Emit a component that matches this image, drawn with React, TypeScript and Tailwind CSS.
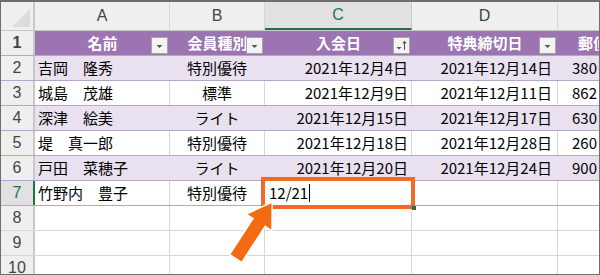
import React from 'react'

const cols = [
  { key: 'A', w: 'w-[135px]' },
  { key: 'B', w: 'w-[95px]' },
  { key: 'C', w: 'w-[147px]' },
  { key: 'D', w: 'w-[146px]' },
]

type Row = { name: string; kind: string; joined: string; deadline: string; zip: string }

const rows: Row[] = [
  { name: '吉岡　隆秀', kind: '特別優待', joined: '2021年12月4日', deadline: '2021年12月14日', zip: '380' },
  { name: '城島　茂雄', kind: '標準', joined: '2021年12月9日', deadline: '2021年12月11日', zip: '862' },
  { name: '深津　絵美', kind: 'ライト', joined: '2021年12月15日', deadline: '2021年12月17日', zip: '630' },
  { name: '堤　真一郎', kind: '特別優待', joined: '2021年12月18日', deadline: '2021年12月28日', zip: '260' },
  { name: '戸田　菜穂子', kind: 'ライト', joined: '2021年12月20日', deadline: '2021年12月24日', zip: '900' },
]

const font = { fontFamily: '"Noto Sans CJK JP", "Noto Sans", sans-serif' }

function FilterButton({ sorted }: { sorted?: boolean }) {
  return (
    <div className="absolute right-[2px] top-[6px] w-[17px] h-[17px] bg-[#f4f4f4] border border-[#a6a6a6] flex items-center justify-center">
      <svg width="13" height="13" viewBox="0 0 13 13">
        {sorted ? (
          <>
            <path d="M1.5 8 L6.5 8 L4 10.5 Z" fill="#555" />
            <path d="M9.5 11 L9.5 2.5 M7.8 4.3 L9.5 2.5 L11.2 4.3" stroke="#555" strokeWidth="1.1" fill="none" />
          </>
        ) : (
          <path d="M3.5 6 L9.5 6 L6.5 9 Z" fill="#555" />
        )}
      </svg>
    </div>
  )
}

function RowHead({ n, active }: { n: number; active?: boolean }) {
  return (
    <div
      className={
        'w-[34px] shrink-0 h-full flex items-center justify-center text-[16px] border-r-2 ' +
        (active
          ? 'bg-[#e1e1e1] text-[#217346] border-[#217346]'
          : 'bg-[#efefef] text-[#444] border-[#c8c8c8]')
      }
      style={{ fontFamily: '"Liberation Sans", Arial, sans-serif' }}
    >
      {n}
    </div>
  )
}

export default function App() {
  return (
    <div className="w-[600px] h-[275px] overflow-hidden bg-white border border-t-2 border-[#6e6e6e] relative" style={font}>
      {/* column letters */}
      <div className="flex h-[29px] bg-[#efefef] border-b border-[#c8c8c8]">
        <div className="w-[34px] shrink-0 border-r-2 border-[#c8c8c8] relative">
          <svg className="absolute right-[3px] bottom-[3px]" width="18" height="18" viewBox="0 0 18 18">
            <path d="M18 0 L18 18 L0 18 Z" fill="#dcdcdc" />
          </svg>
        </div>
        {cols.map((c) => (
          <div
            key={c.key}
            className={
              c.w +
              ' shrink-0 flex items-center justify-center text-[16px] border-r ' +
              (c.key === 'C'
                ? 'bg-[#e1e1e1] text-[#217346] border-[#c8c8c8] border-b-2 border-b-[#217346]'
                : 'text-[#444] border-[#d6d6d6]')
            }
            style={{ fontFamily: '"Liberation Sans", Arial, sans-serif' }}
          >
            {c.key}
          </div>
        ))}
        <div className="flex-1" />
      </div>

      {/* table header row */}
      <div className="flex h-[25px] bg-[#9b74b1] text-white font-bold text-[15px] border-b border-[#b9a5c9]">
        <RowHead n={1} />
        <div className="w-[135px] shrink-0 relative flex items-center justify-center">名前<FilterButton /></div>
        <div className="w-[95px] shrink-0 relative flex items-center justify-center">会員種別<FilterButton /></div>
        <div className="w-[147px] shrink-0 relative flex items-center justify-center">入会日<FilterButton sorted /></div>
        <div className="w-[146px] shrink-0 relative flex items-center justify-center">特典締切日<FilterButton /></div>
        <div className="flex-1 pl-[20px] flex items-center whitespace-nowrap">郵便番号</div>
      </div>

      {rows.map((r, i) => {
        const band = i % 2 === 0
        const grid = band ? 'border-transparent' : 'border-[#d6d6d6]'
        return (
          <div
            key={i}
            className={
              'flex h-[25px] text-[15px] text-black border-b border-[#b9a5c9] ' + (band ? 'bg-[#e9e1ef]' : 'bg-white')
            }
          >
            <RowHead n={i + 2} />
            <div className={'w-[135px] shrink-0 px-[3px] flex items-center whitespace-nowrap border-r ' + grid}>{r.name}</div>
            <div className={'w-[95px] shrink-0 flex items-center justify-center border-r ' + grid}>{r.kind}</div>
            <div className={'w-[147px] shrink-0 px-[3px] flex items-center justify-end whitespace-nowrap border-r ' + grid}>{r.joined}</div>
            <div className={'w-[146px] shrink-0 px-[5px] flex items-center justify-end whitespace-nowrap border-r ' + grid}>{r.deadline}</div>
            <div className="flex-1 pl-[14px] flex items-center">{r.zip}</div>
          </div>
        )
      })}

      {/* row 7 being edited */}
      <div className="flex h-[25px] text-[15px] text-black border-b border-[#b9a5c9]">
        <RowHead n={7} active />
        <div className="w-[135px] shrink-0 px-[3px] flex items-center whitespace-nowrap border-r border-[#d6d6d6]">竹野内　豊子</div>
        <div className="w-[95px] shrink-0 flex items-center justify-center border-r border-[#d6d6d6]">特別優待</div>
        <div className="w-[147px] shrink-0 px-[4px] flex items-center border-r border-[#d6d6d6]">
          12/21<span className="inline-block w-px h-[18px] bg-black ml-px" />
        </div>
        <div className="w-[146px] shrink-0 border-r border-[#d6d6d6]" />
        <div className="flex-1" />
      </div>

      {[8, 9, 10].map((n) => (
        <div key={n} className="flex h-[25px] border-b border-[#d6d6d6]">
          <RowHead n={n} />
          <div className="w-[135px] shrink-0 border-r border-[#d6d6d6]" />
          <div className="w-[95px] shrink-0 border-r border-[#d6d6d6]" />
          <div className="w-[147px] shrink-0 border-r border-[#d6d6d6]" />
          <div className="w-[146px] shrink-0 border-r border-[#d6d6d6]" />
          <div className="flex-1" />
        </div>
      ))}

      {/* callout around the edited cell */}
      <div className="absolute left-[260px] top-[175px] w-[154px] h-[32px] border-[4px] border-[#f26a23]" />
      <div className="absolute left-[411px] top-[204px] w-[4px] h-[4px] bg-[#217346]" />

      <svg className="absolute left-0 top-0" width="600" height="275" viewBox="0 0 600 275">
        <g transform="translate(252.5 229) rotate(33)">
          <path
            d="M0 -33 L14 -11 L6.5 -11 L6.5 32 L-6.5 32 L-6.5 -11 L-14 -11 Z"
            fill="#f26a12"
            stroke="#ffffff"
            strokeWidth="3"
            strokeLinejoin="miter"
            paintOrder="stroke"
          />
        </g>
      </svg>
    </div>
  )
}
